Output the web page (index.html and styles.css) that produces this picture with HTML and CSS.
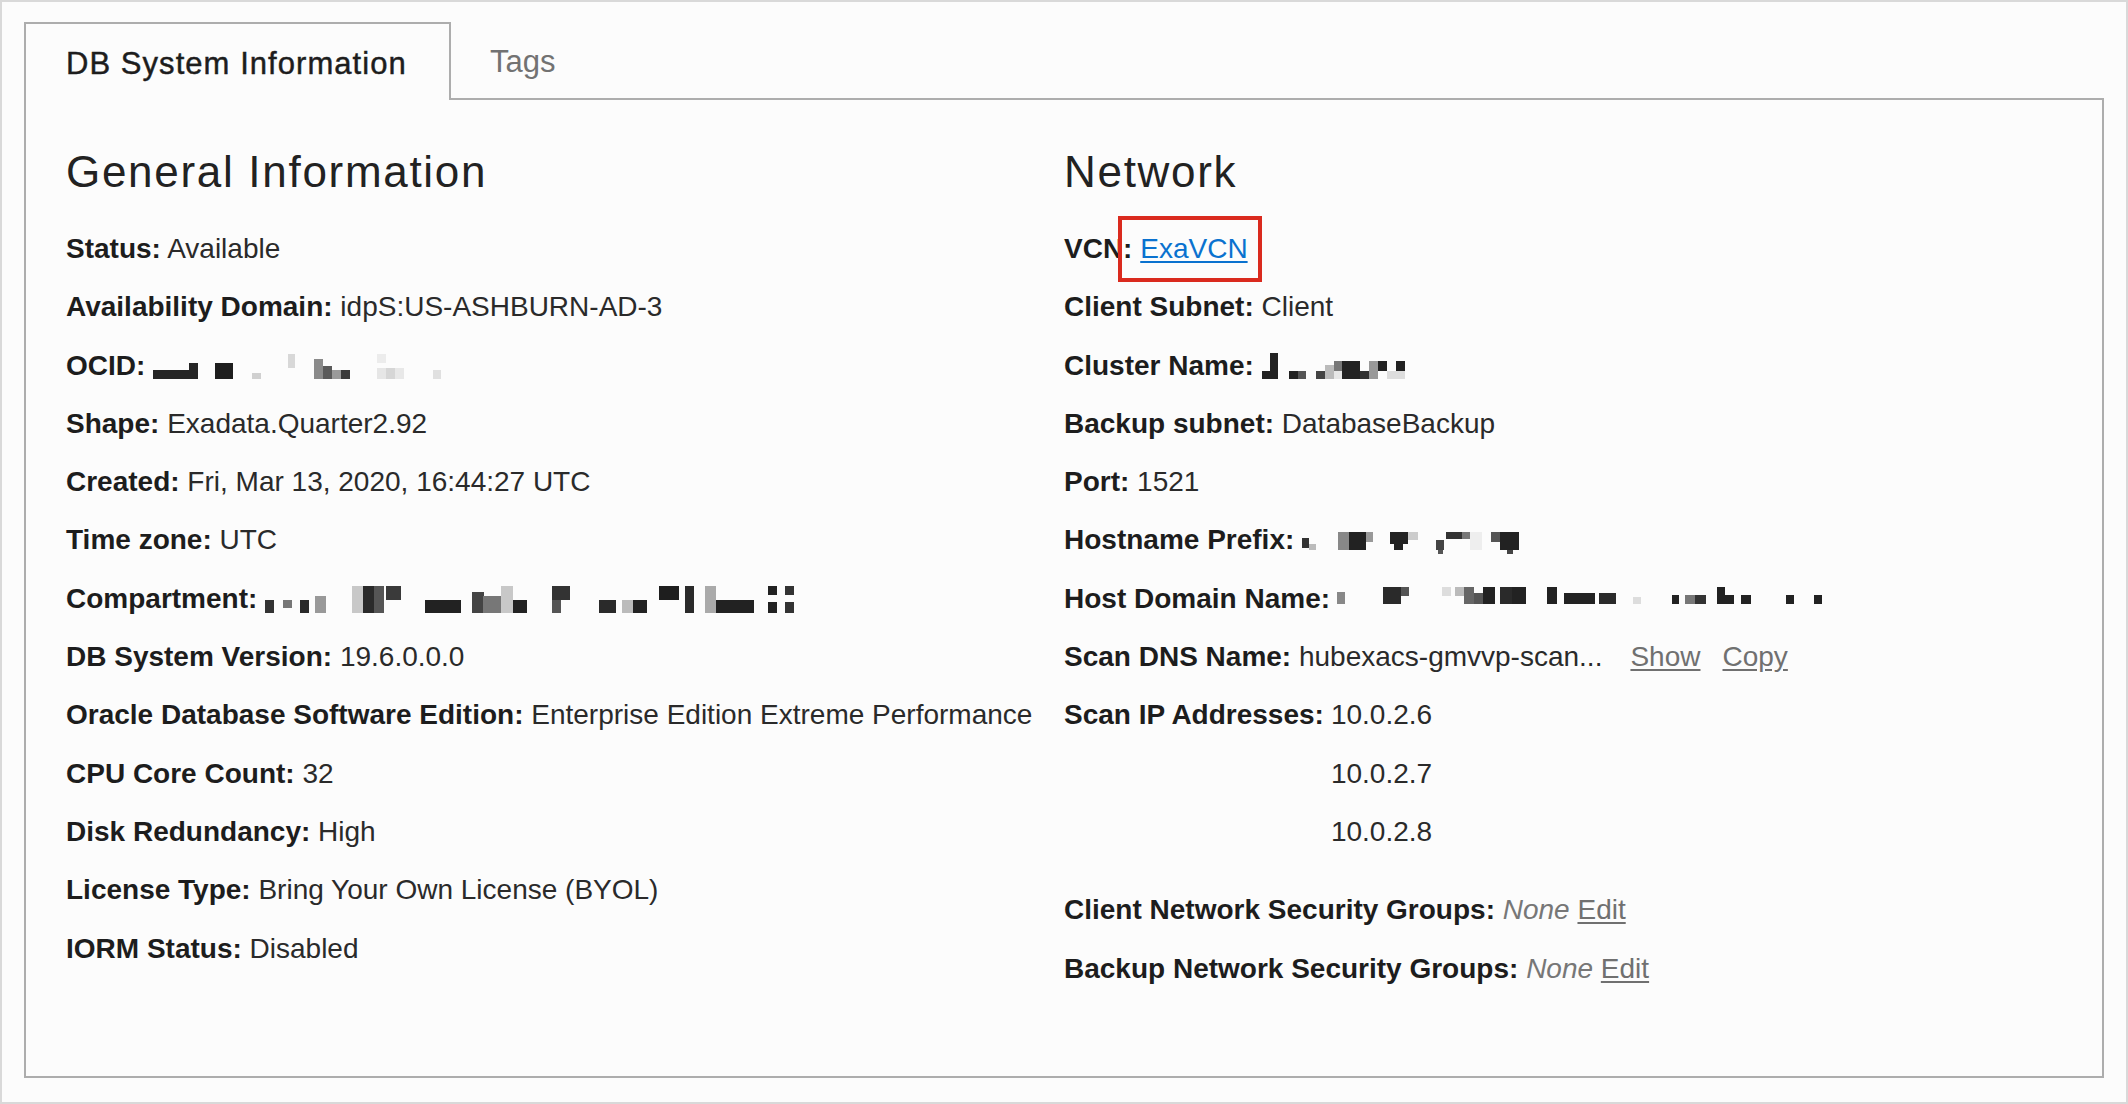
FILE: index.html
```html
<!DOCTYPE html>
<html lang="en">
<head>
<meta charset="utf-8">
<title>DB System Information</title>
<link rel="stylesheet" href="styles.css">
</head>
<body>
<div class="frame">
  <div class="tabs">
    <div class="tab tab-active">DB System Information</div>
    <div class="tab tab-plain">Tags</div>
    <div class="tab-fill"></div>
  </div>
  <div class="panel">
    <section class="col">
      <h2 class="heading">General Information</h2>
      <div class="row"><b class="lbl">Status:</b> Available</div>
      <div class="row"><b class="lbl">Availability Domain:</b> idpS:US-ASHBURN-AD-3</div>
      <div class="row"><b class="lbl">OCID:</b> <svg class="mosaic mz-a" width="290" height="25" viewBox="0 0 290 25" aria-hidden="true">
        <rect x="0" y="16" width="36" height="9" fill="#252525"/>
        <rect x="36" y="9" width="9" height="16" fill="#252525"/>
        <rect x="62" y="9" width="18" height="16" fill="#1e1e1e"/>
        <rect x="99" y="19" width="9" height="6" fill="#d0d0d0"/>
        <rect x="135" y="0" width="7" height="14" fill="#d8d8d8"/>
        <rect x="161" y="5" width="9" height="20" fill="#8a8a8a"/>
        <rect x="170" y="12" width="9" height="13" fill="#5a5a5a"/>
        <rect x="179" y="16" width="9" height="9" fill="#9a9a9a"/>
        <rect x="188" y="16" width="9" height="9" fill="#3a3a3a"/>
        <rect x="224" y="0" width="9" height="9" fill="#ececec"/>
        <rect x="224" y="14" width="9" height="11" fill="#e6e6e6"/>
        <rect x="233" y="14" width="9" height="11" fill="#d6d6d6"/>
        <rect x="242" y="14" width="9" height="11" fill="#e8e8e8"/>
        <rect x="280" y="16" width="8" height="9" fill="#e0e0e0"/>
      </svg></div>
      <div class="row"><b class="lbl">Shape:</b> Exadata.Quarter2.92</div>
      <div class="row"><b class="lbl">Created:</b> Fri, Mar 13, 2020, 16:44:27 UTC</div>
      <div class="row"><b class="lbl">Time zone:</b> UTC</div>
      <div class="row"><b class="lbl">Compartment:</b> <svg class="mosaic mz-b" width="530" height="27" viewBox="0 0 530 27" aria-hidden="true">
        <rect x="0" y="14" width="9" height="13" fill="#333"/>
        <rect x="18" y="14" width="9" height="8" fill="#777"/>
        <rect x="35" y="14" width="9" height="13" fill="#2a2a2a"/>
        <rect x="50" y="10" width="11" height="17" fill="#999"/>
        <rect x="87" y="0" width="11" height="27" fill="#c8c8c8"/>
        <rect x="98" y="0" width="11" height="27" fill="#2a2a2a"/>
        <rect x="109" y="0" width="10" height="27" fill="#555"/>
        <rect x="121" y="0" width="15" height="14" fill="#3a3a3a"/>
        <rect x="160" y="14" width="36" height="13" fill="#222"/>
        <rect x="207" y="6" width="12" height="21" fill="#444"/>
        <rect x="218" y="10" width="18" height="17" fill="#777"/>
        <rect x="236" y="0" width="12" height="27" fill="#c8c8c8"/>
        <rect x="248" y="14" width="14" height="13" fill="#222"/>
        <rect x="287" y="0" width="18" height="14" fill="#333"/>
        <rect x="287" y="14" width="9" height="13" fill="#555"/>
        <rect x="334" y="14" width="17" height="13" fill="#2a2a2a"/>
        <rect x="357" y="14" width="11" height="13" fill="#bbb"/>
        <rect x="368" y="14" width="14" height="13" fill="#222"/>
        <rect x="394" y="0" width="20" height="14" fill="#1e1e1e"/>
        <rect x="420" y="0" width="9" height="27" fill="#2a2a2a"/>
        <rect x="440" y="0" width="11" height="27" fill="#aaa"/>
        <rect x="451" y="14" width="38" height="13" fill="#222"/>
        <rect x="503" y="0" width="9" height="9" fill="#222"/>
        <rect x="503" y="16" width="9" height="11" fill="#222"/>
        <rect x="520" y="0" width="9" height="9" fill="#333"/>
        <rect x="520" y="16" width="9" height="11" fill="#333"/>
      </svg></div>
      <div class="row"><b class="lbl">DB System Version:</b> 19.6.0.0.0</div>
      <div class="row"><b class="lbl">Oracle Database Software Edition:</b> Enterprise Edition Extreme Performance</div>
      <div class="row"><b class="lbl">CPU Core Count:</b> 32</div>
      <div class="row"><b class="lbl">Disk Redundancy:</b> High</div>
      <div class="row"><b class="lbl">License Type:</b> Bring Your Own License (BYOL)</div>
      <div class="row"><b class="lbl">IORM Status:</b> Disabled</div>
    </section>
    <section class="col">
      <h2 class="heading">Network</h2>
      <div class="row row-vcn"><b class="lbl">VCN:</b> <a class="link" href="#">ExaVCN</a><span class="callout"></span></div>
      <div class="row"><b class="lbl">Client Subnet:</b> Client</div>
      <div class="row"><b class="lbl">Cluster Name:</b> <svg class="mosaic mz-a" width="144" height="26" viewBox="0 0 144 26" aria-hidden="true">
        <rect x="0" y="18" width="9" height="8" fill="#222"/>
        <rect x="8" y="0" width="8" height="26" fill="#222"/>
        <rect x="27" y="18" width="9" height="8" fill="#222"/>
        <rect x="36" y="18" width="8" height="8" fill="#555"/>
        <rect x="54" y="18" width="9" height="8" fill="#444"/>
        <rect x="63" y="12" width="9" height="14" fill="#bbb"/>
        <rect x="72" y="8" width="8" height="10" fill="#777"/>
        <rect x="72" y="18" width="8" height="8" fill="#e6e6e6"/>
        <rect x="80" y="8" width="18" height="18" fill="#222"/>
        <rect x="98" y="18" width="9" height="8" fill="#333"/>
        <rect x="107" y="8" width="9" height="18" fill="#999"/>
        <rect x="116" y="8" width="9" height="10" fill="#222"/>
        <rect x="125" y="18" width="9" height="8" fill="#ddd"/>
        <rect x="134" y="8" width="9" height="10" fill="#222"/>
        <rect x="134" y="18" width="9" height="8" fill="#ddd"/>
      </svg></div>
      <div class="row"><b class="lbl">Backup subnet:</b> DatabaseBackup</div>
      <div class="row"><b class="lbl">Port:</b> 1521</div>
      <div class="row"><b class="lbl">Hostname Prefix:</b> <svg class="mosaic mz-c" width="217" height="24" viewBox="0 0 217 24" aria-hidden="true">
        <rect x="0" y="8" width="7" height="10" fill="#333"/>
        <rect x="7" y="14" width="7" height="6" fill="#bbb"/>
        <rect x="36" y="2" width="11" height="18" fill="#888"/>
        <rect x="47" y="2" width="17" height="18" fill="#222"/>
        <rect x="64" y="2" width="7" height="10" fill="#999"/>
        <rect x="88" y="2" width="18" height="12" fill="#222"/>
        <rect x="92" y="14" width="9" height="6" fill="#222"/>
        <rect x="106" y="2" width="10" height="8" fill="#ccc"/>
        <rect x="134" y="10" width="8" height="10" fill="#444"/>
        <rect x="136" y="20" width="5" height="4" fill="#555"/>
        <rect x="144" y="2" width="16" height="7" fill="#333"/>
        <rect x="160" y="2" width="8" height="7" fill="#777"/>
        <rect x="168" y="2" width="12" height="18" fill="#eee"/>
        <rect x="189" y="2" width="9" height="10" fill="#555"/>
        <rect x="198" y="2" width="19" height="18" fill="#222"/>
        <rect x="205" y="20" width="6" height="4" fill="#444"/>
      </svg></div>
      <div class="row"><b class="lbl">Host Domain Name:</b><svg class="mosaic mz-d" width="487" height="17" viewBox="0 0 487 17" aria-hidden="true">
        <rect x="0" y="5" width="8" height="12" fill="#888"/>
        <rect x="46" y="0" width="18" height="17" fill="#2a2a2a"/>
        <rect x="64" y="0" width="8" height="9" fill="#555"/>
        <rect x="105" y="0" width="9" height="9" fill="#ddd"/>
        <rect x="118" y="0" width="9" height="9" fill="#bbb"/>
        <rect x="127" y="0" width="10" height="17" fill="#666"/>
        <rect x="137" y="6" width="9" height="11" fill="#555"/>
        <rect x="146" y="0" width="12" height="17" fill="#222"/>
        <rect x="163" y="0" width="12" height="17" fill="#2a2a2a"/>
        <rect x="175" y="0" width="14" height="17" fill="#222"/>
        <rect x="210" y="0" width="10" height="17" fill="#222"/>
        <rect x="227" y="6" width="31" height="11" fill="#222"/>
        <rect x="262" y="6" width="17" height="11" fill="#2a2a2a"/>
        <rect x="296" y="10" width="8" height="7" fill="#ddd"/>
        <rect x="335" y="8" width="7" height="9" fill="#222"/>
        <rect x="348" y="8" width="10" height="9" fill="#777"/>
        <rect x="358" y="8" width="11" height="9" fill="#333"/>
        <rect x="380" y="0" width="8" height="17" fill="#222"/>
        <rect x="388" y="8" width="9" height="9" fill="#222"/>
        <rect x="404" y="8" width="10" height="9" fill="#222"/>
        <rect x="449" y="8" width="8" height="9" fill="#222"/>
        <rect x="477" y="8" width="8" height="9" fill="#222"/>
      </svg></div>
      <div class="row"><b class="lbl">Scan DNS Name:</b> hubexacs-gmvvp-scan...<a class="action action-show" href="#">Show</a><a class="action action-copy" href="#">Copy</a></div>
      <div class="row row-ips"><b class="lbl">Scan IP Addresses:</b><div class="ips"><div>10.0.2.6</div><div>10.0.2.7</div><div>10.0.2.8</div></div></div>
      <div class="row row-gap"><b class="lbl">Client Network Security Groups:</b> <i class="none">None</i> <a class="action" href="#">Edit</a></div>
      <div class="row"><b class="lbl">Backup Network Security Groups:</b> <i class="none">None</i> <a class="action" href="#">Edit</a></div>
    </section>
  </div>
</div>
</body>
</html>
```

FILE: styles.css
```css
html, body {
  margin: 0;
  padding: 0;
  background: #fcfcfc;
}

body {
  font-family: "Liberation Sans", Arial, Helvetica, sans-serif;
  color: #242424;
}

.frame {
  box-sizing: border-box;
  width: 2128px;
  height: 1104px;
  border: 2px solid #d9d9d9;
  padding: 20px 22px 24px 22px;
  display: flex;
  flex-direction: column;
  background: #fcfcfc;
}

.tabs {
  display: flex;
  align-items: stretch;
  height: 78px;
  flex: none;
}

.tab {
  box-sizing: border-box;
  height: 78px;
  font-size: 31px;
  line-height: 36px;
  white-space: nowrap;
}

.tab-active {
  width: 427px;
  border: 2px solid #adadad;
  border-bottom: none;
  padding: 22px 0 0 40px;
  color: #1d1d1d;
  letter-spacing: 1.05px;
  -webkit-text-stroke: 0.45px #1d1d1d;
  background: #fcfcfc;
}

.tab-plain {
  padding: 22px 30px 0 39px;
  color: #727272;
  border-bottom: 2px solid #adadad;
}

.tab-fill {
  flex: 1;
  border-bottom: 2px solid #adadad;
}

.panel {
  flex: 1;
  box-sizing: border-box;
  border: 2px solid #adadad;
  border-top: none;
  padding: 47px 0 0 40px;
  display: grid;
  grid-template-columns: 998px 1fr;
  align-items: start;
}

.heading {
  margin: 0 0 23px 0;
  font-size: 44px;
  line-height: 50px;
  font-weight: normal;
  letter-spacing: 1.7px;
  color: #222;
}

.row {
  font-size: 28px;
  line-height: 58.3px;
  white-space: nowrap;
  color: #2a2a2a;
}

.lbl {
  font-weight: bold;
  color: #1d1d1d;
}

.mosaic {
  display: inline-block;
}

.mz-a { vertical-align: -4px; }
.mz-b { vertical-align: -5px; }
.mz-c { vertical-align: -5px; }
.mz-d { vertical-align: 4px; margin-left: 7px; }

.row-vcn {
  position: relative;
}

.link {
  color: #0a72cf;
  text-decoration: underline;
  text-underline-offset: 3px;
}

.callout {
  position: absolute;
  left: 54px;
  top: -4px;
  width: 144px;
  height: 66px;
  box-sizing: border-box;
  border: 4px solid #da2a1e;
}

.action {
  color: #707070;
  text-decoration: underline;
  text-underline-offset: 3px;
}

.action-show {
  margin-left: 28px;
}

.action-copy {
  margin-left: 22px;
}

.row-ips {
  display: flex;
  gap: 7px;
}

.ips > div {
  line-height: 58.3px;
}

.row-gap {
  margin-top: 20px;
}

.none {
  color: #777;
}
```
